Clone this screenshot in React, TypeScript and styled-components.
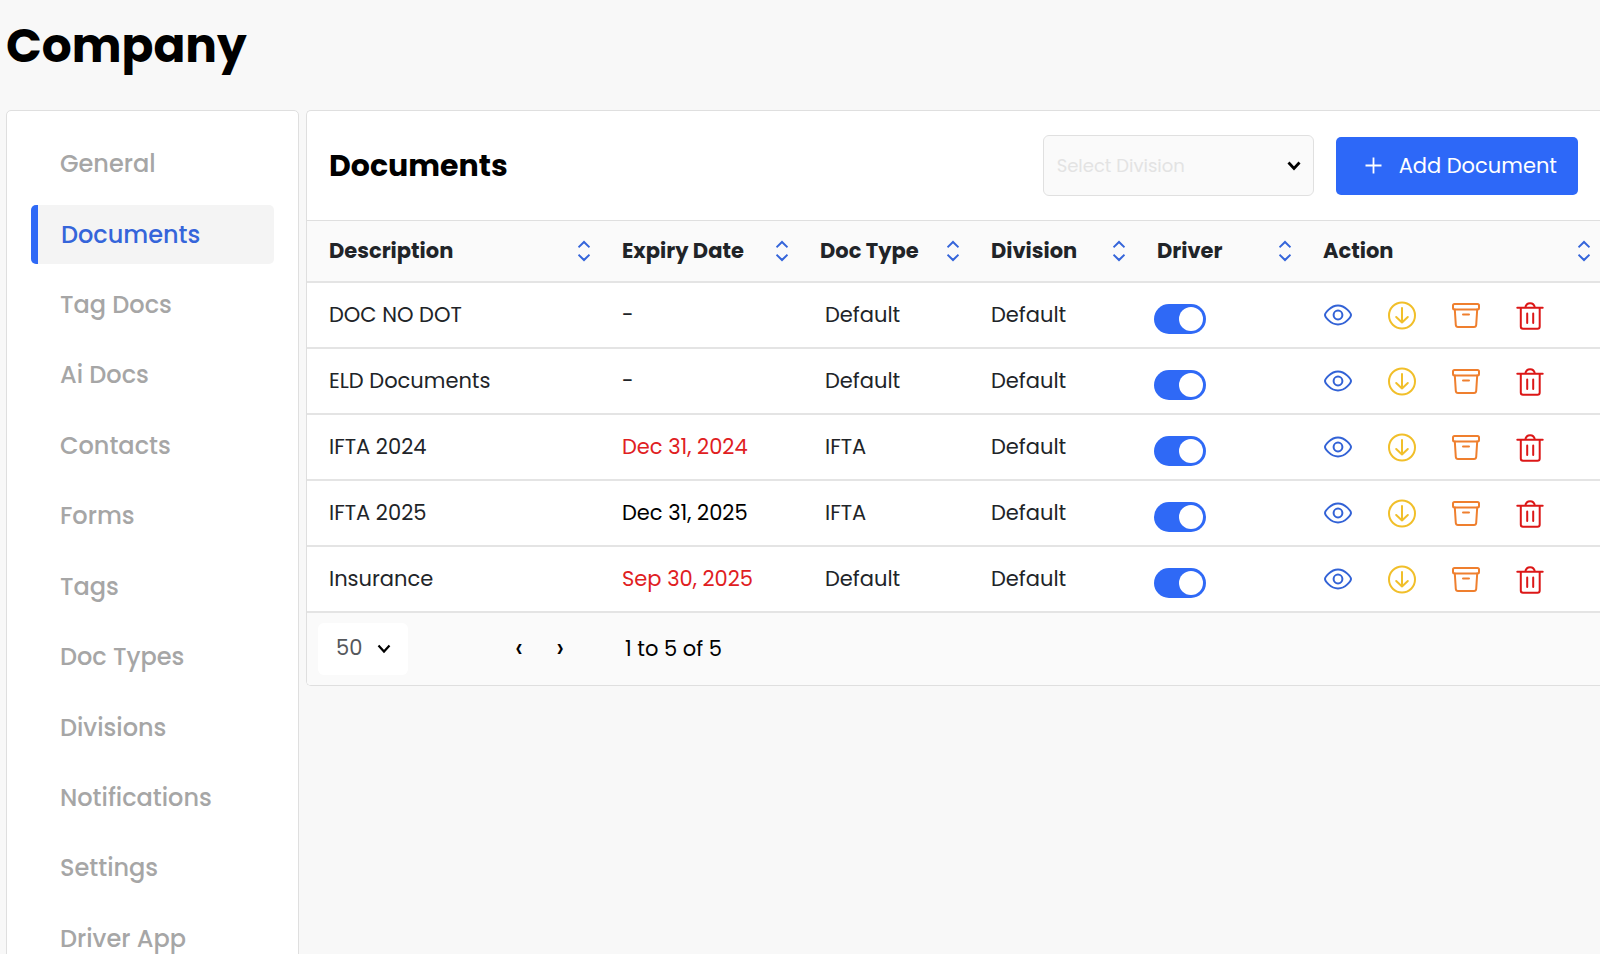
import React, { useState } from 'react';
import styled, { createGlobalStyle } from 'styled-components';

const GlobalStyle = createGlobalStyle`
  *, *::before, *::after { box-sizing: border-box; }
  body {
    margin: 0;
    background: #f8f8f8;
    color: #000;
    font-family: Poppins, "Open Sans", sans-serif;
    font-size: 21px;
    line-height: 30px;
  }
  button, select, input { font: inherit; }
`;

const Page = styled.div`
  height: 100vh;
  overflow: hidden;
`;

const Title = styled.h1`
  margin: 0;
  padding: 16px 6px 34px;
  font-size: 47px;
  line-height: 60px;
  font-weight: 700;
`;

const Layout = styled.div`
  display: grid;
  grid-template-columns: 293px minmax(0, 1fr);
  align-items: start;
  gap: 7px;
  padding-left: 6px;
`;

const Sidebar = styled.nav`
  padding: 24px;
  background: #fff;
  border: 1px solid #dfdfdf;
  border-radius: 5px;
`;

const NavList = styled.ul`
  display: grid;
  grid-auto-rows: 1fr;
  gap: 12px;
  min-height: 833px;
  margin: 0;
  padding: 0;
  list-style: none;
`;

const NavLink = styled.a<{ $active: boolean }>`
  display: flex;
  align-items: center;
  height: 100%;
  padding-left: ${(p) => (p.$active ? 23 : 22)}px;
  border-left: 7px solid ${(p) => (p.$active ? '#2f69f6' : 'transparent')};
  border-radius: 5px;
  background: ${(p) => (p.$active ? '#f4f4f4' : 'transparent')};
  color: ${(p) => (p.$active ? '#3565da' : '#a6a6a6')};
  font-size: 24px;
  font-weight: 500;
  text-decoration: none;
`;

const Panel = styled.section`
  overflow: hidden;
  background: #fff;
  border: 1px solid #dfdfdf;
  border-right: 0;
  border-radius: 5px 0 0 5px;
`;

const PanelHeader = styled.header`
  display: flex;
  align-items: center;
  gap: 22px;
  height: 109px;
  padding: 0 22px;
`;

const PanelTitle = styled.h2`
  margin: 0 auto 0 0;
  font-size: 30px;
  line-height: 40px;
  font-weight: 700;
`;

const SelectWrap = styled.div`
  position: relative;
  display: flex;
  align-items: center;
`;

const DivisionSelect = styled.select`
  width: 271px;
  height: 61px;
  padding: 0 40px 0 13px;
  appearance: none;
  border: 1px solid #e0e0e0;
  border-radius: 6px;
  background: #fafafa;
  color: #e3e3e3;
  font-size: 18px;
`;

const PageSizeSelect = styled.select`
  width: 90px;
  height: 52px;
  padding: 0 0 2px 18px;
  appearance: none;
  border: 0;
  border-radius: 6px;
  background: #fff;
  color: #55585c;
`;

const ChevronSvg = styled.svg<{ $right: number }>`
  position: absolute;
  right: ${(p) => p.$right}px;
  pointer-events: none;
`;

const AddButton = styled.button`
  display: flex;
  align-items: center;
  gap: 17px;
  height: 58px;
  padding: 0 21px 0 29px;
  border: 0;
  border-radius: 5px;
  background: #2d68f8;
  color: #fff;
`;

const Table = styled.table`
  width: 100%;
  table-layout: fixed;
  border-collapse: separate;
  border-spacing: 0;
  color: #212428;
`;

const HeadCell = styled.th`
  height: 63px;
  padding: 0 10px 0 22px;
  border-top: 1px solid #dfdfdf;
  border-bottom: 2px solid #e4e4e4;
  background: #fafafa;
  text-align: left;
  font-weight: 700;
  white-space: nowrap;
`;

const HeadContent = styled.div`
  display: flex;
  align-items: center;
  justify-content: space-between;
`;

const SortButton = styled.button`
  display: flex;
  padding: 0;
  border: 0;
  background: none;
`;

const Cell = styled.td<{ $indent?: number; $tone?: string }>`
  height: 66px;
  padding: 0 0 0 ${(p) => p.$indent ?? 22}px;
  border-bottom: 2px solid #e4e4e4;
  color: ${(p) => p.$tone ?? 'inherit'};
  white-space: nowrap;
`;

const Toggle = styled.input`
  display: block;
  width: 52px;
  height: 30px;
  margin: 8px 0 0;
  padding: 3px;
  appearance: none;
  border-radius: 15px;
  background: #c8c8c8;
  &::before {
    content: '';
    display: block;
    width: 24px;
    height: 24px;
    border-radius: 50%;
    background: #fff;
  }
  &:checked { background: #2f69f6; }
  &:checked::before { margin-left: auto; }
`;

const Actions = styled.div`
  display: flex;
  gap: 36px;
`;

const IconButton = styled.button<{ $color: string }>`
  display: flex;
  padding: 0;
  border: 0;
  background: none;
  color: ${(p) => p.$color};
`;

const Footer = styled.footer`
  display: flex;
  align-items: center;
  height: 72px;
  padding: 0 11px;
  background: #fafafa;
`;

const Pager = styled.div`
  display: flex;
  gap: 21px;
  margin: 0 55px 0 101px;
`;

const PageButton = styled.button`
  display: flex;
  justify-content: center;
  width: 20px;
  padding: 0 0 5px;
  border: 0;
  background: none;
  color: #000;
  font-size: 29px;
`;

const navItems = [
  'General', 'Documents', 'Tag Docs', 'Ai Docs', 'Contacts', 'Forms', 'Tags',
  'Doc Types', 'Divisions', 'Notifications', 'Settings', 'Driver App',
];

const columns = [
  { label: 'Description', width: 293 },
  { label: 'Expiry Date', width: 198 },
  { label: 'Doc Type', width: 171 },
  { label: 'Division', width: 166 },
  { label: 'Driver', width: 166 },
  { label: 'Action', width: 299 },
];

const documents = [
  { name: 'DOC NO DOT', expiry: '-', type: 'Default', tone: '#212428' },
  { name: 'ELD Documents', expiry: '-', type: 'Default', tone: '#212428' },
  { name: 'IFTA 2024', expiry: 'Dec 31, 2024', type: 'IFTA', tone: '#e0201f' },
  { name: 'IFTA 2025', expiry: 'Dec 31, 2025', type: 'IFTA', tone: '#000' },
  { name: 'Insurance', expiry: 'Sep 30, 2025', type: 'Default', tone: '#e0201f' },
];

const actions = [
  {
    label: 'View',
    color: '#3262d6',
    shape: (
      <>
        <path d="M1 15C1 13.3 6.5 5.5 14 5.5S27 13.3 27 15 21.5 24.5 14 24.5 1 16.7 1 15Z" />
        <circle cx="14" cy="15" r="4.4" />
      </>
    ),
  },
  {
    label: 'Download',
    color: '#f1bf2a',
    shape: (
      <>
        <circle cx="14" cy="15.5" r="13" />
        <path d="M14 8v14.5M8.2 17l5.8 5.5 5.8-5.5" />
      </>
    ),
  },
  {
    label: 'Archive',
    color: '#ef7f2e',
    shape: (
      <>
        <rect x="1" y="4" width="26" height="5.5" rx="1.5" />
        <path d="M2.8 9.5l1 15.5q.2 2 2.2 2h16q2 0 2.2-2l1-15.5M11 14.5h6" />
      </>
    ),
  },
  {
    label: 'Delete',
    color: '#dc1717',
    shape: (
      <path d="M1.3 7.7h25.4M9.3 7.7a4.9 5.5 0 0 1 9.6 0M4.8 7.7v18.8a2.2 2.2 0 0 0 2.2 2.2h14.5a2.2 2.2 0 0 0 2.2-2.2V7.7M11.2 13.5v9.5M17.2 13.5v9.5" />
    ),
  },
];

function Chevron({ right, weight }: { right: number; weight: number }) {
  return (
    <ChevronSvg $right={right} width="14" height="10" viewBox="0 0 14 10" fill="none" stroke="#000" strokeWidth={weight} aria-hidden="true">
      <path d="M1.5 1.5L7 7.5l5.5-6" />
    </ChevronSvg>
  );
}

function DocumentRow({ doc }: { doc: (typeof documents)[number] }) {
  const [on, setOn] = useState(true);
  return (
    <tr>
      <Cell>{doc.name}</Cell>
      <Cell $tone={doc.tone}>{doc.expiry}</Cell>
      <Cell $indent={27}>{doc.type}</Cell>
      <Cell>Default</Cell>
      <Cell $indent={19}>
        <Toggle
          type="checkbox"
          role="switch"
          aria-label={`Driver access to ${doc.name}`}
          checked={on}
          onChange={() => setOn(!on)}
        />
      </Cell>
      <Cell $indent={23}>
        <Actions>
          {actions.map((a) => (
            <IconButton key={a.label} type="button" $color={a.color} aria-label={`${a.label} ${doc.name}`}>
              <svg width="28" height="30" viewBox="0 0 28 30" fill="none" stroke="currentColor" strokeWidth="2" strokeLinecap="round" strokeLinejoin="round">
                {a.shape}
              </svg>
            </IconButton>
          ))}
        </Actions>
      </Cell>
    </tr>
  );
}

export default function App() {
  return (
    <Page>
      <GlobalStyle />
      <Title>Company</Title>
      <Layout>
        <Sidebar aria-label="Company settings">
          <NavList>
            {navItems.map((item) => (
              <li key={item}>
                <NavLink href="#" $active={item === 'Documents'}>{item}</NavLink>
              </li>
            ))}
          </NavList>
        </Sidebar>
        <Panel>
          <PanelHeader>
            <PanelTitle>Documents</PanelTitle>
            <SelectWrap>
              <DivisionSelect aria-label="Division" defaultValue="">
                <option value="">Select Division</option>
                <option value="default">Default</option>
              </DivisionSelect>
              <Chevron right={13} weight={2.8} />
            </SelectWrap>
            <AddButton type="button">
              <svg width="17" height="17" viewBox="0 0 17 17" stroke="currentColor" strokeWidth="1.8" aria-hidden="true">
                <path d="M8.5 .5v16M.5 8.5h16" />
              </svg>
              Add Document
            </AddButton>
          </PanelHeader>
          <Table>
            <colgroup>
              {columns.map((c) => <col key={c.label} width={c.width} />)}
            </colgroup>
            <thead>
              <tr>
                {columns.map((c) => (
                  <HeadCell key={c.label} scope="col">
                    <HeadContent>
                      {c.label}
                      <SortButton type="button" aria-label={`Sort by ${c.label}`}>
                        <svg width="12" height="22" viewBox="0 0 12 22" fill="none" stroke="#3565da" strokeWidth="2">
                          <path d="M.5 7.3L6 2l5.500 5.300M.5 14.700L6 20l5.500-5.300" />
                        </svg>
                      </SortButton>
                    </HeadContent>
                  </HeadCell>
                ))}
              </tr>
            </thead>
            <tbody>
              {documents.map((d) => <DocumentRow key={d.name} doc={d} />)}
            </tbody>
          </Table>
          <Footer>
            <SelectWrap>
              <PageSizeSelect aria-label="Rows per page" defaultValue="50">
                <option>50</option>
                <option>100</option>
              </PageSizeSelect>
              <Chevron right={17} weight={2.2} />
            </SelectWrap>
            <Pager>
              <PageButton type="button" aria-label="Previous page">‹</PageButton>
              <PageButton type="button" aria-label="Next page">›</PageButton>
            </Pager>
            <span>1 to 5 of 5</span>
          </Footer>
        </Panel>
      </Layout>
    </Page>
  );
}
